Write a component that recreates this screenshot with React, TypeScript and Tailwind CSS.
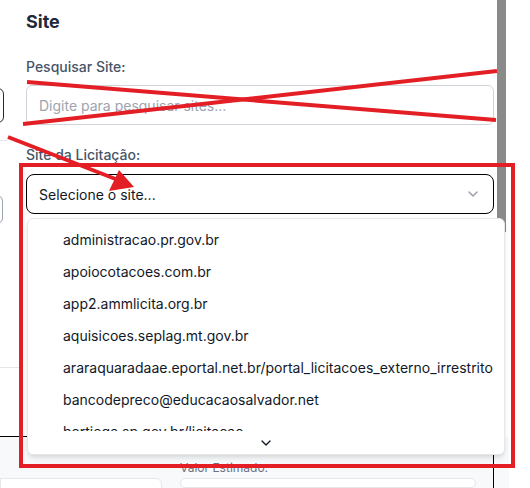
import React from "react";
import { ChevronDown } from "lucide-react";

const sites = [
  "administracao.pr.gov.br",
  "apoiocotacoes.com.br",
  "app2.ammlicita.org.br",
  "aquisicoes.seplag.mt.gov.br",
  "araraquaradaae.eportal.net.br/portal_licitacoes_externo_irrestrito",
  "bancodepreco@educacaosalvador.net",
  "bertioga.sp.gov.br/licitacao",
];

function Annotations() {
  // marcações vermelhas por cima da captura
  return (
    <svg
      className="absolute inset-0 pointer-events-none"
      width={530}
      height={488}
      viewBox="0 0 530 488"
    >
      <g stroke="#e31e24" strokeWidth={4} fill="none">
        <line x1={27} y1={82} x2={496} y2={120} />
        <line x1={23} y1={124} x2={497} y2={71} />
        <line x1={8} y1={137} x2={118} y2={180} />
        <rect x={21} y={165} width={492} height={301} />
      </g>
      <polygon points="134,187 109,191 119,170" fill="#e31e24" />
    </svg>
  );
}

export default function App() {
  return (
    <div className="relative w-[530px] h-[488px] overflow-hidden bg-white font-['Inter',sans-serif]">
      <div className="flex h-[437px]">
        {/* pedaços da página por trás */}
        <div className="w-[26px] shrink-0 flex flex-col">
          <div className="mt-[88px] -ml-[10px] h-[35px] w-[14px] rounded-r-md border border-[#1f2937]" />
          <div className="mt-[17px] h-px w-[8px] bg-[#e5e7eb]" />
          <div className="mt-[54px] -ml-[10px] h-[29px] w-[13px] rounded-r-md border border-[#9ca3af]" />
          <div className="mt-[143px] h-px w-[20px] bg-[#e5e7eb]" />
          <div className="mt-[68px] h-px w-[27px] bg-black" />
        </div>

        <div className="w-[471px] shrink-0 flex flex-col pr-[3px]">
          <h2 className="mt-[8px] text-[18px] leading-[28px] font-bold text-[#1e293b]">Site</h2>
          <label className="mt-[21px] text-[14px] leading-[20px] font-medium text-[#475569]">
            Pesquisar Site:
          </label>
          <input
            className="mt-[8px] h-[40px] rounded-md border border-[#d1d5db] bg-white pl-3 text-[14px] text-[#111827] placeholder:text-[#9ca3af] outline-none"
            placeholder="Digite para pesquisar sites..."
          />
          <label className="mt-[20px] text-[14px] leading-[20px] font-medium text-[#475569]">
            Site da Licitação:
          </label>
          <button className="mt-[9px] h-[40px] rounded-lg border border-black bg-white pl-3 pr-3 flex items-center justify-between text-[14px] text-[#111827]">
            <span>Selecione o site...</span>
            <ChevronDown size={16} className="text-[#6b7280] opacity-70" />
          </button>
        </div>

        <div className="w-[9px] shrink-0">
          <div className="h-[232px] bg-[#8a8a8a]" />
        </div>
      </div>

      <div className="h-[51px] w-[509px] bg-[#f8f9fb] flex">
        <div className="w-[162px] mt-[41px] h-[30px] rounded-r-md border border-[#e5e7eb] bg-white" />
        <div className="ml-[18px] w-[296px] flex flex-col">
          <span className="mt-[23px] text-[12px] leading-[16px] text-[#6b7280]">Valor Estimado:</span>
          <div className="mt-[2px] h-[30px] rounded-md border border-[#e5e7eb] bg-white" />
        </div>
        <div className="ml-[17px] mt-[18px] w-px bg-black" />
      </div>

      {/* lista aberta do select */}
      <div className="absolute left-[27px] top-[218px] w-[478px] h-[237px] flex flex-col rounded-md border border-[#e5e7eb] bg-white shadow-md">
        <div className="h-[212px] overflow-hidden pt-[4px]">
          {sites.map((s) => (
            <div
              key={s}
              className="h-[32px] flex items-center pl-[35px] text-[14px] text-[#111827] whitespace-nowrap"
            >
              {s}
            </div>
          ))}
        </div>
        <div className="flex-1 flex items-center justify-center">
          <ChevronDown size={16} className="text-[#111827]" />
        </div>
      </div>

      <Annotations />
    </div>
  );
}
